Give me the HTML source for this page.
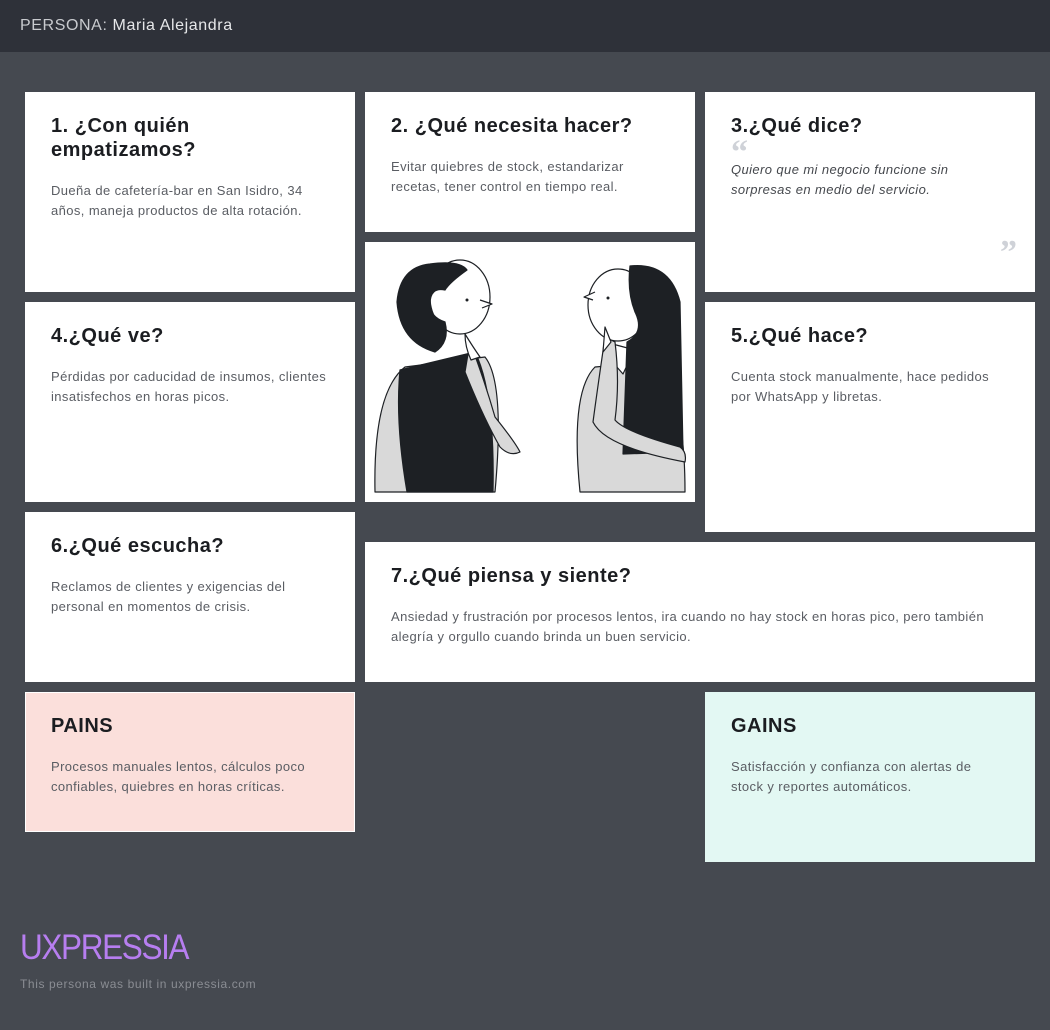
<!DOCTYPE html>
<html><head><meta charset="utf-8"><style>
*{margin:0;padding:0;box-sizing:border-box}
body{width:1050px;height:1030px;background:#454950;font-family:"Liberation Sans",sans-serif;position:relative;overflow:hidden}
.hdr{position:absolute;left:0;top:0;width:1050px;height:52px;background:#2e3139}
.hdr span{position:absolute;left:20px;top:17px;font-size:16px;color:#c8cace;letter-spacing:.6px}
.hdr b{font-weight:normal;color:#e6e7e9}
.c{position:absolute;background:#fff;padding:22px 26px}
.c h2{font-size:20px;font-weight:bold;color:#1b1d21;line-height:24px;margin-bottom:19px;letter-spacing:.5px}
.c p{font-size:13px;color:#5a5d63;line-height:20px;letter-spacing:.4px}
.q{font-style:italic;color:#45484d!important}
.logo{position:absolute;left:20px;top:928px;font-size:35px;color:#b77ef0;letter-spacing:-1.5px;transform:scaleX(.9);transform-origin:left}
.foot{position:absolute;left:20px;top:977px;font-size:12px;color:#8a8d93;letter-spacing:.6px}
</style></head><body>
<div class="hdr"><span>PERSONA: <b>Maria Alejandra</b></span></div>
<div class="c" style="left:25px;top:92px;width:330px;height:200px"><h2>1. ¿Con quién<br>empatizamos?</h2><p>Dueña de cafetería-bar en San Isidro, 34 años, maneja productos de alta rotación.</p></div>
<div class="c" style="left:365px;top:92px;width:330px;height:140px"><h2>2. ¿Qué necesita hacer?</h2><p>Evitar quiebres de stock, estandarizar recetas, tener control en tiempo real.</p></div>
<div class="c" style="left:705px;top:92px;width:330px;height:200px"><h2 style="margin-bottom:0">3.¿Qué dice?</h2><div style="font-size:34px;color:#cfd2d8;line-height:30px;height:22px;font-family:'Liberation Serif',serif;font-weight:bold">“</div><p class="q">Quiero que mi negocio funcione sin sorpresas en medio del servicio.</p><div style="position:absolute;right:18px;top:142px;font-size:34px;color:#cfd2d8;font-family:'Liberation Serif',serif;font-weight:bold">”</div></div>
<div class="c" style="left:365px;top:242px;width:330px;height:260px;padding:0">
<svg width="330" height="260" viewBox="0 0 330 260">
<g stroke="#1d2024" stroke-width="1.2" stroke-linejoin="round">
<path d="M10 250 Q8 150 40 125 L120 115 Q140 140 130 250 Z" fill="#d9d9d9"/>
<path d="M35 128 L110 110 Q130 150 128 250 L42 250 Q30 180 35 128Z" fill="#1d2024"/>
<path d="M105 100 Q120 140 130 175 Q150 200 155 210 Q145 215 135 205 Q118 175 100 130Z" fill="#d9d9d9"/>
<ellipse cx="95" cy="55" rx="30" ry="37" fill="#fff"/>
<path d="M115 58 L127 62 L117 66" fill="#fff"/>
<path d="M70 110 Q35 100 32 60 Q35 25 65 22 Q95 18 102 28 Q85 40 80 48 Q65 45 65 62 Q65 75 80 80 Q85 100 70 110Z" fill="#1d2024"/>
<path d="M100 92 Q108 105 115 115 L106 118 Q100 105 100 92Z" fill="#fff"/>
<path d="M215 250 Q205 150 230 125 L290 120 Q320 150 320 250 Z" fill="#d9d9d9"/>
<path d="M240 100 L270 108 L268 125 L240 118Z" fill="#fff"/>
<path d="M243 115 L258 132 L265 117" fill="#fff"/>
<ellipse cx="253" cy="63" rx="30" ry="36" fill="#fff"/>
<path d="M230 50 L219 55 L228 58" fill="#fff"/>
<path d="M265 24 Q305 20 315 60 L318 210 L258 212 L262 100 Q280 90 270 70 Q262 50 265 24Z" fill="#1d2024"/>
<path d="M240 95 Q232 150 228 180 Q240 205 320 220 Q322 210 315 205 Q260 190 250 178 Q255 140 250 100Z" fill="#d9d9d9"/>
<path d="M238 110 L240 85 L246 100Z" fill="#fff"/>
</g>
<circle cx="102" cy="58" r="1.5" fill="#1d2024"/><circle cx="243" cy="56" r="1.5" fill="#1d2024"/>
</svg></div>
<div class="c" style="left:25px;top:302px;width:330px;height:200px"><h2>4.¿Qué ve?</h2><p>Pérdidas por caducidad de insumos, clientes insatisfechos en horas picos.</p></div>
<div class="c" style="left:705px;top:302px;width:330px;height:230px"><h2>5.¿Qué hace?</h2><p>Cuenta stock manualmente, hace pedidos por WhatsApp y libretas.</p></div>
<div class="c" style="left:25px;top:512px;width:330px;height:170px"><h2>6.¿Qué escucha?</h2><p>Reclamos de clientes y exigencias del personal en momentos de crisis.</p></div>
<div class="c" style="left:365px;top:542px;width:670px;height:140px"><h2>7.¿Qué piensa y siente?</h2><p>Ansiedad y frustración por procesos lentos, ira cuando no hay stock en horas pico, pero también alegría y orgullo cuando brinda un buen servicio.</p></div>
<div class="c" style="left:25px;top:692px;width:330px;height:140px;background:#fbdfdb;border:1px solid #fff;padding:21px 25px"><h2>PAINS</h2><p>Procesos manuales lentos, cálculos poco confiables, quiebres en horas críticas.</p></div>
<div class="c" style="left:705px;top:692px;width:330px;height:170px;background:#e3f8f3"><h2>GAINS</h2><p>Satisfacción y confianza con alertas de<br>stock y reportes automáticos.</p></div>
<div class="logo">UXPRESSIA</div>
<div class="foot">This persona was built in uxpressia.com</div>
</body></html>
